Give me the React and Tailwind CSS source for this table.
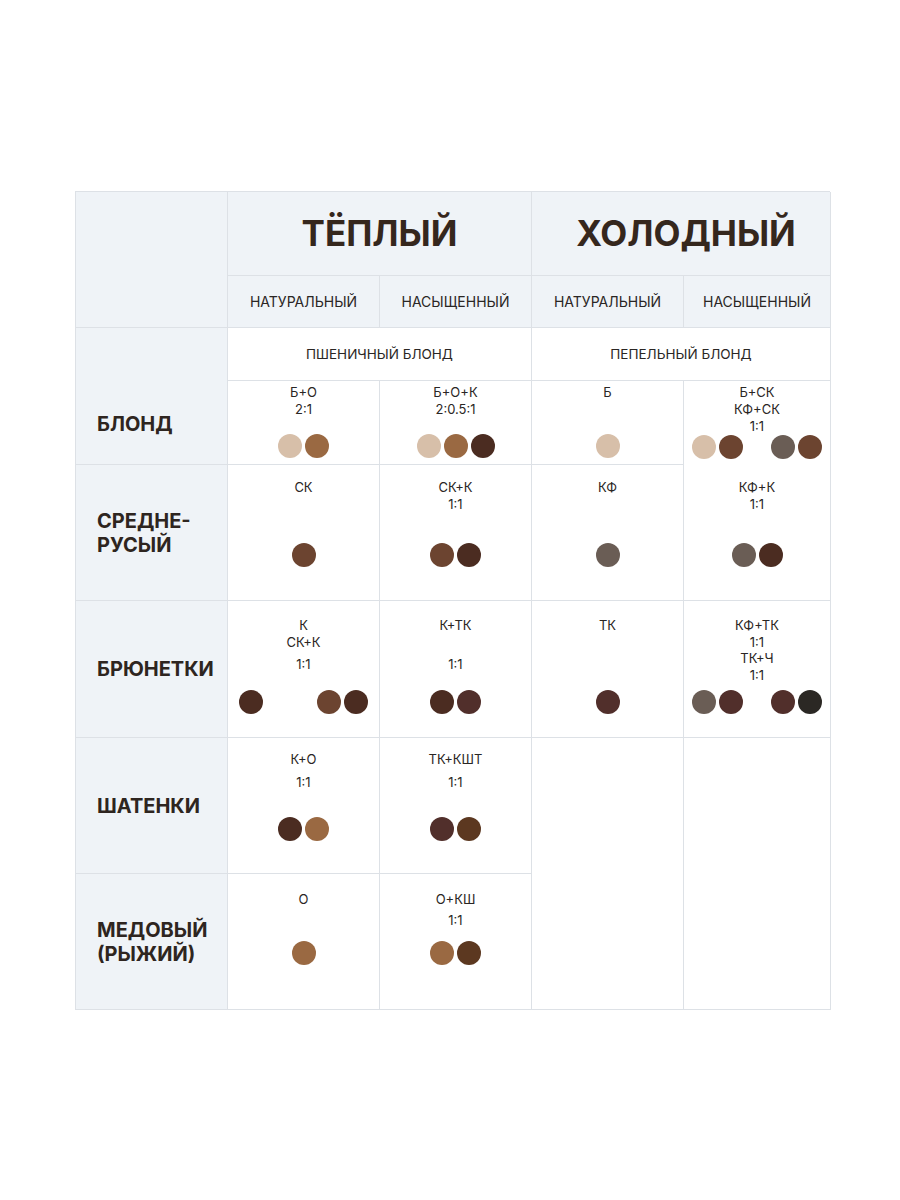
const L = "#d7bfa9";
const M = "#9a6942";
const D = "#4b2c21";
const S = "#6c4430";
const G = "#6a5d55";
const T = "#512f2b";
const B = "#2b2824";
const KSH = "#5c3820";

const rows = [
  {
    label: ["БЛОНД"],
    labelPad: "pt-[56px]",
    pt: "pt-[3px]",
    pb: "pb-[6px]",
    cells: [
      { lines: ["Б+О", "2:1"], groups: [[L, M]] },
      { lines: ["Б+О+К", "2:0.5:1"], groups: [[L, M, D]] },
      { lines: ["Б"], groups: [[L]] },
      { lines: ["Б+СК", "КФ+СК", "1:1"], groups: [[L, S], [G, S]], pad: "px-2" },
    ],
  },
  {
    label: ["СРЕДНЕ-", "РУСЫЙ"],
    pt: "pt-[14px]",
    pb: "pb-[33px]",
    cells: [
      { lines: ["СК"], groups: [[S]] },
      { lines: ["СК+К", "1:1"], groups: [[S, D]] },
      { lines: ["КФ"], groups: [[G]] },
      { lines: ["КФ+К", "1:1"], groups: [[G, D]] },
    ],
  },
  {
    label: ["БРЮНЕТКИ"],
    pt: "pt-[16px]",
    pb: "pb-[23px]",
    cells: [
      { lines: ["К", "СК+К", ["1:1", "mt-[5px]"]], groups: [[D], [S, D]], pad: "px-[11px]" },
      { lines: ["К+ТК", ["1:1", "mt-[22px]"]], groups: [[D, T]] },
      { lines: ["ТК"], groups: [[T]] },
      { lines: ["КФ+ТК", "1:1", "ТК+Ч", "1:1"], groups: [[G, T], [T, B]], pad: "px-2", tight: true },
    ],
  },
  {
    label: ["ШАТЕНКИ"],
    pt: "pt-[13px]",
    pb: "pb-[32px]",
    cells: [
      { lines: ["К+О", ["1:1", "mt-[6px]"]], groups: [[D, M]] },
      { lines: ["ТК+КШТ", ["1:1", "mt-[6px]"]], groups: [[T, KSH]] },
    ],
  },
  {
    label: ["МЕДОВЫЙ", "(РЫЖИЙ)"],
    pt: "pt-[17px]",
    pb: "pb-[44px]",
    cells: [
      { lines: ["О"], groups: [[M]] },
      { lines: ["О+КШ", ["1:1", "mt-[4px]"]], groups: [[M, KSH]] },
    ],
  },
];

const heights = ["h-[84px]", "h-[136px]", "h-[137px]", "h-[136px]", "h-[136px]"];

function Dots({ groups, pad }) {
  if (groups.length === 1) {
    return (
      <div className="flex gap-[3px]">
        {groups[0].map((c, i) => (
          <span key={i} className="block w-6 h-6 rounded-full" style={{ backgroundColor: c }} />
        ))}
      </div>
    );
  }
  return (
    <div className={`flex w-full justify-between ${pad}`}>
      {groups.map((g, gi) => (
        <div key={gi} className="flex gap-[3px]">
          {g.map((c, i) => (
            <span key={i} className="block w-6 h-6 rounded-full" style={{ backgroundColor: c }} />
          ))}
        </div>
      ))}
    </div>
  );
}

function Cell({ cell, row }) {
  return (
    <div
      className={`flex flex-col items-center border-r border-b border-[#dde1e6] bg-white ${row.pt} ${row.pb}`}
    >
      <div className="flex flex-col items-center text-[13px] text-[#2a2624]">
        {cell.lines.map((ln, i) => {
          const [t, mt] = Array.isArray(ln) ? ln : [ln, ""];
          return (
            <div key={i} className={`${cell.tight ? "leading-[16.5px]" : "leading-[17px]"} ${mt}`}>
              {t}
            </div>
          );
        })}
      </div>
      <div className="mt-auto w-full flex justify-center">
        <Dots groups={cell.groups} pad={cell.pad || "px-2"} />
      </div>
    </div>
  );
}

export default function App() {
  const head = "bg-[#eff3f7] border-r border-b border-[#dde1e6]";
  return (
    <div className="min-h-[1200px] w-[900px] bg-white pt-[191px] pl-[75px] font-['Inter',sans-serif]">
      <div className="grid w-[755px] grid-cols-[152px_152px_152px_152px_147px] border-t border-l border-[#dde1e6]">
        <div className={`${head} row-span-2`} />
        <div className={`${head} col-span-2 h-[84px] flex items-center justify-center`}>
          <span className="text-[35px] font-bold text-[#35271d]">ТЁПЛЫЙ</span>
        </div>
        <div className={`${head} col-span-2 h-[84px] flex items-center justify-center pl-[10px]`}>
          <span className="text-[35px] font-bold text-[#35271d]">ХОЛОДНЫЙ</span>
        </div>
        {["НАТУРАЛЬНЫЙ", "НАСЫЩЕННЫЙ", "НАТУРАЛЬНЫЙ", "НАСЫЩЕННЫЙ"].map((t, i) => (
          <div key={i} className={`${head} h-[52px] flex items-center justify-center text-[14px] text-[#2a2624]`}>
            {t}
          </div>
        ))}

        {rows.map((row, ri) => (
          <div key={ri} className="contents">
            <div
              className={`${head} ${ri === 0 ? "row-span-2" : ""} flex flex-col justify-center pl-[21px] text-[20px] leading-[24px] font-bold text-[#2e2520] ${row.labelPad || ""}`}
            >
              {row.label.map((l, i) => (
                <div key={i}>{l}</div>
              ))}
            </div>
            {ri === 0 && (
              <>
                <div className="col-span-2 h-[53px] flex items-center justify-center border-r border-b border-[#dde1e6] bg-white text-[13.5px] text-[#2a2624]">
                  ПШЕНИЧНЫЙ БЛОНД
                </div>
                <div className="col-span-2 h-[53px] flex items-center justify-center border-r border-b border-[#dde1e6] bg-white text-[13.5px] text-[#2a2624]">
                  ПЕПЕЛЬНЫЙ БЛОНД
                </div>
              </>
            )}
            {row.cells.map((c, ci) => (
              <div key={ci} className={`grid ${heights[ri]}`}>
                <Cell cell={c} row={row} />
              </div>
            ))}
            {ri === 3 && (
              <>
                <div className="row-span-2 border-r border-b border-[#dde1e6] bg-white" />
                <div className="row-span-2 border-r border-b border-[#dde1e6] bg-white" />
              </>
            )}
          </div>
        ))}
      </div>
    </div>
  );
}
